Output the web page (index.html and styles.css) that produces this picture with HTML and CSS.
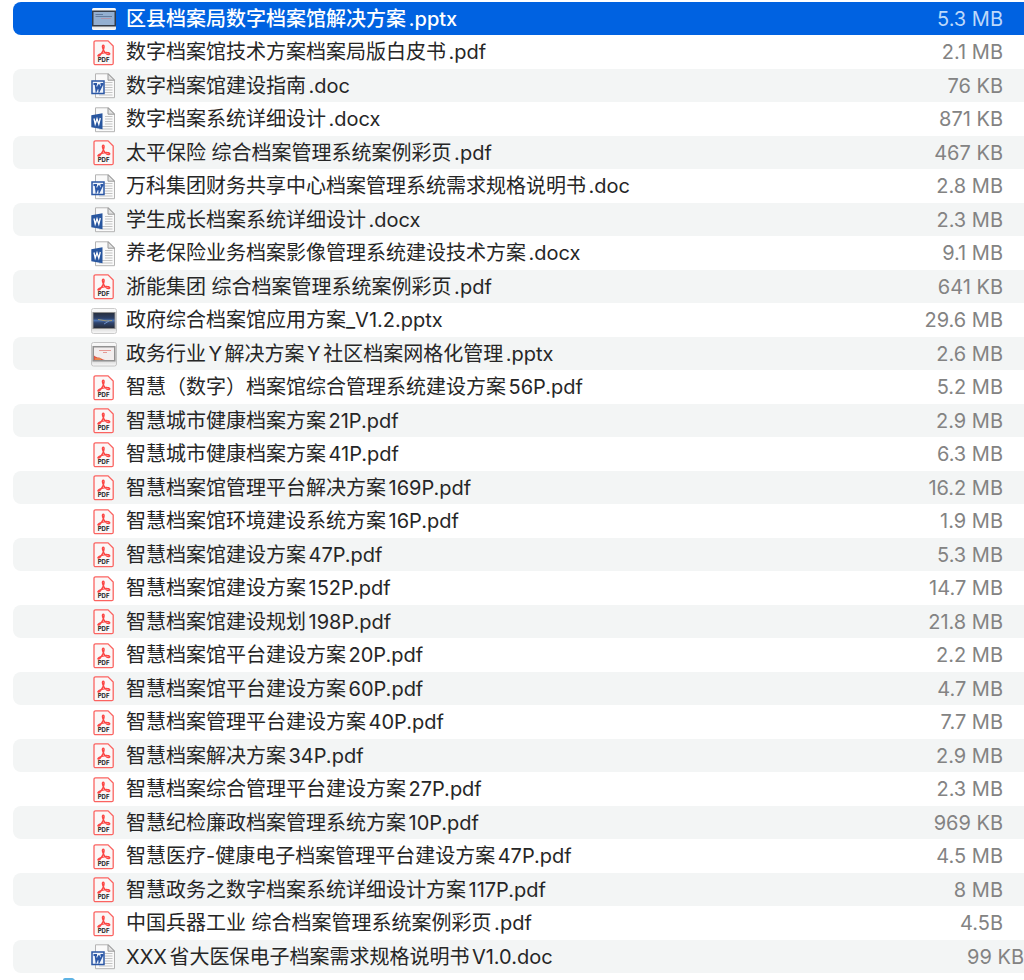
FILE: index.html
```
<!DOCTYPE html>
<html lang="zh-CN">
<head>
  <meta charset="UTF-8"/>
  <meta name="viewport" content="width=device-width,initial-scale=1.0"/>
  <title>档案方案</title>
  <link rel="stylesheet" href="styles.css">
</head>
<body>

<svg class="symbols" aria-hidden="true">
  <linearGradient id="frame" x1="0" y1="0" x2="0" y2="1">
    <stop offset="0" stop-color="#fafafa"/>
    <stop offset="0.8" stop-color="#dcdcdc"/>
    <stop offset="1" stop-color="#fafafa"/>
  </linearGradient>
  <linearGradient id="night" x1="0" y1="0" x2="0" y2="1">
    <stop offset="0" stop-color="#28303f"/>
    <stop offset="0.35" stop-color="#2c4068"/>
    <stop offset="0.5" stop-color="#4b72b0"/>
    <stop offset="0.65" stop-color="#2f4570"/>
    <stop offset="1" stop-color="#262c3a"/>
  </linearGradient>
  <symbol id="pdf" viewBox="0 0 26 26">
    <path d="M4.500 .8H17L22.200 6V23.200a1.500 1.500 0 0 1-1.500 1.500H4.500A1.500 1.500 0 0 1 3 23.200V2.300A1.500 1.500 0 0 1 4.500 .8Z" fill="#fbf7f7" stroke="#fb6360" stroke-width="1.300"/>
    <path d="M12.300 5.200c-1.500 0-.8 3 .3 5 1.200 2.400 3.600 4.500 5.400 4.300 1.700-.4.500-2-1.800-2-3.300-.1-8.700 1.500-9.200 3-.3 1 1.300.9 2.400-.7 1.800-2.400 3.600-5.800 3.700-8.100 0-.8-.2-1.500-.8-1.500Z" fill="none" stroke="#fb4644" stroke-width="1.400"/>
    <text x="12.600" y="22" text-anchor="middle" class="pdf-label">PDF</text>
  </symbol>
  <symbol id="page" viewBox="0 0 26 26">
    <path d="M4.500 .8H17.500L23.500 6.800V24.700H4.500Z" fill="#fafafa" stroke="#b4b4b4"/>
    <path d="M17 .8V7.200H23.500Z" fill="#e3e3e3" stroke="#999"/>
    <path d="M14 9.500H21.500M14 12H21.500M14 14.500H21.500M14 17H21.500M8 19.500H21.500M8 22H21.500" stroke="#c4c4c4"/>
  </symbol>
  <symbol id="doc" viewBox="0 0 26 26">
    <use href="#page"/>
    <rect x="1" y="8" width="12" height="12.500" fill="#eef3fb" stroke="#2b57a5" stroke-width="1.500"/>
    <path d="M2.500 11H6M4.500 11l.8 6.500L8 11.500l.3 6L11.500 11M9.500 11h3" fill="none" stroke="#2b57a5" stroke-width="1.800"/>
  </symbol>
  <symbol id="docx" viewBox="0 0 26 26">
    <use href="#page"/>
    <path d="M.3 8.300L11.500 6.300V22.200L.3 20.300Z" fill="#28569f"/>
    <path d="M3 11.500l1.200 5.500L6 11.800l1.800 5.400L9.300 11" fill="none" stroke="#fff" stroke-width="1.300"/>
  </symbol>
  <symbol id="ppt-blue" viewBox="0 0 26 26">
    <rect x="1" y="2" width="24" height="22" rx="1.500" fill="url(#frame)"/>
    <rect x="1" y="4.500" width="24" height="16" fill="#343c48"/>
    <rect x="2.500" y="6" width="21" height="13" fill="#93afd1"/>
    <path d="M4.500 8.500H12M4.500 10.500H21" stroke="#627c9f"/>
    <path d="M10 12.500H20" stroke="#b195ab"/>
  </symbol>
  <symbol id="ppt-night" viewBox="0 0 26 26">
    <rect x=".5" y=".5" width="25" height="25" rx="2" fill="url(#frame)" stroke="#ccc"/>
    <rect x="1.500" y="4" width="23" height="17" fill="#8d8d8d"/>
    <rect x="2.500" y="5" width="21" height="15" fill="url(#night)"/>
    <path d="M7 11.500l9 1.500 5-.5" fill="none" stroke="#a39a78"/>
    <path d="M13 16l5-3" stroke="#6b8fc8"/>
  </symbol>
  <symbol id="ppt-red" viewBox="0 0 26 26">
    <rect x=".5" y="1.500" width="25" height="23.500" rx="2" fill="url(#frame)" stroke="#c4c4c4"/>
    <rect x="1.500" y="5" width="23" height="15.500" fill="#929292"/>
    <rect x="3" y="6.500" width="20" height="12.500" fill="#f2eeee"/>
    <path d="M8 9.500H20M12 11.500H16" stroke="#e69a95"/>
    <path d="M3 14.500c2 1.500 3 2 5 2 2 .2 3 2 6 2.500H3Z" fill="#de5546"/>
    <path d="M4 18h6" stroke="#ecb14c"/>
  </symbol>
  <symbol id="folder" viewBox="0 0 26 26">
    <path d="M1 2a2 2 0 0 1 2-2h7a3 3 0 0 1 2 1l2 2h9a2 2 0 0 1 2 2v16H1Z" fill="#5eb3e4"/>
  </symbol>
</svg>

<main class="finder">
  <table class="file-list" aria-label="文件列表">
    <tbody>
      <tr class="selected"><td class="name"><svg class="icon"><use href="#ppt-blue"/></svg>区县档案局数字档案馆解决方案.pptx</td><td class="size">5.3 MB</td></tr>
      <tr><td class="name"><svg class="icon"><use href="#pdf"/></svg>数字档案馆技术方案档案局版白皮书.pdf</td><td class="size">2.1 MB</td></tr>
      <tr><td class="name"><svg class="icon"><use href="#doc"/></svg>数字档案馆建设指南.doc</td><td class="size">76 KB</td></tr>
      <tr><td class="name"><svg class="icon"><use href="#docx"/></svg>数字档案系统详细设计.docx</td><td class="size">871 KB</td></tr>
      <tr><td class="name"><svg class="icon"><use href="#pdf"/></svg>太平保险 综合档案管理系统案例彩页.pdf</td><td class="size">467 KB</td></tr>
      <tr><td class="name"><svg class="icon"><use href="#doc"/></svg>万科集团财务共享中心档案管理系统需求规格说明书.doc</td><td class="size">2.8 MB</td></tr>
      <tr><td class="name"><svg class="icon"><use href="#docx"/></svg>学生成长档案系统详细设计.docx</td><td class="size">2.3 MB</td></tr>
      <tr><td class="name"><svg class="icon"><use href="#docx"/></svg>养老保险业务档案影像管理系统建设技术方案.docx</td><td class="size">9.1 MB</td></tr>
      <tr><td class="name"><svg class="icon"><use href="#pdf"/></svg>浙能集团 综合档案管理系统案例彩页.pdf</td><td class="size">641 KB</td></tr>
      <tr><td class="name"><svg class="icon"><use href="#ppt-night"/></svg>政府综合档案馆应用方案_V1.2.pptx</td><td class="size">29.6 MB</td></tr>
      <tr><td class="name"><svg class="icon"><use href="#ppt-red"/></svg>政务行业Y解决方案Y社区档案网格化管理.pptx</td><td class="size">2.6 MB</td></tr>
      <tr><td class="name"><svg class="icon"><use href="#pdf"/></svg>智慧（数字）档案馆综合管理系统建设方案56P.pdf</td><td class="size">5.2 MB</td></tr>
      <tr><td class="name"><svg class="icon"><use href="#pdf"/></svg>智慧城市健康档案方案21P.pdf</td><td class="size">2.9 MB</td></tr>
      <tr><td class="name"><svg class="icon"><use href="#pdf"/></svg>智慧城市健康档案方案41P.pdf</td><td class="size">6.3 MB</td></tr>
      <tr><td class="name"><svg class="icon"><use href="#pdf"/></svg>智慧档案馆管理平台解决方案169P.pdf</td><td class="size">16.2 MB</td></tr>
      <tr><td class="name"><svg class="icon"><use href="#pdf"/></svg>智慧档案馆环境建设系统方案16P.pdf</td><td class="size">1.9 MB</td></tr>
      <tr><td class="name"><svg class="icon"><use href="#pdf"/></svg>智慧档案馆建设方案47P.pdf</td><td class="size">5.3 MB</td></tr>
      <tr><td class="name"><svg class="icon"><use href="#pdf"/></svg>智慧档案馆建设方案152P.pdf</td><td class="size">14.7 MB</td></tr>
      <tr><td class="name"><svg class="icon"><use href="#pdf"/></svg>智慧档案馆建设规划198P.pdf</td><td class="size">21.8 MB</td></tr>
      <tr><td class="name"><svg class="icon"><use href="#pdf"/></svg>智慧档案馆平台建设方案20P.pdf</td><td class="size">2.2 MB</td></tr>
      <tr><td class="name"><svg class="icon"><use href="#pdf"/></svg>智慧档案馆平台建设方案60P.pdf</td><td class="size">4.7 MB</td></tr>
      <tr><td class="name"><svg class="icon"><use href="#pdf"/></svg>智慧档案管理平台建设方案40P.pdf</td><td class="size">7.7 MB</td></tr>
      <tr><td class="name"><svg class="icon"><use href="#pdf"/></svg>智慧档案解决方案34P.pdf</td><td class="size">2.9 MB</td></tr>
      <tr><td class="name"><svg class="icon"><use href="#pdf"/></svg>智慧档案综合管理平台建设方案27P.pdf</td><td class="size">2.3 MB</td></tr>
      <tr><td class="name"><svg class="icon"><use href="#pdf"/></svg>智慧纪检廉政档案管理系统方案10P.pdf</td><td class="size">969 KB</td></tr>
      <tr><td class="name"><svg class="icon"><use href="#pdf"/></svg>智慧医疗-健康电子档案管理平台建设方案47P.pdf</td><td class="size">4.5 MB</td></tr>
      <tr><td class="name"><svg class="icon"><use href="#pdf"/></svg>智慧政务之数字档案系统详细设计方案117P.pdf</td><td class="size">8 MB</td></tr>
      <tr><td class="name"><svg class="icon"><use href="#pdf"/></svg>中国兵器工业 综合档案管理系统案例彩页.pdf</td><td class="size">4.5B</td></tr>
      <tr><td class="name"><svg class="icon"><use href="#doc"/></svg>XXX省大医保电子档案需求规格说明书V1.0.doc</td><td class="size wide">99 KB</td></tr>
      <tr><td class="name parent"><svg class="icon"><use href="#folder"/></svg></td><td class="size"></td></tr>
    </tbody>
  </table>
</main>

</body>
</html>
```
FILE: styles.css
```
* {
  margin: 0;
  padding: 0;
  box-sizing: border-box;
}

body {
  font-family: Inter, "Noto Sans CJK SC", sans-serif;
  font-size: 20px;
  line-height: 32px;
  background: #fff;
  color: #262626;
}

/* holds the shared icon symbols, draws nothing itself */
.symbols {
  position: absolute;
  width: 26px;
  height: 26px;
}

.finder {
  height: 100vh;
  overflow: hidden;
  padding: 2px 0 0 13px;
}

.file-list {
  width: 100%;
  border-collapse: collapse;
  text-autospace: normal;
}

.file-list tr {
  height: 34px;
}

.file-list tr:nth-child(odd) {
  height: 33px;
}

.file-list td {
  white-space: nowrap;
  vertical-align: middle;
}

.file-list td:first-child {
  border-radius: 8px 0 0 8px;
}

.file-list tr:nth-child(odd) td {
  background: #f3f5f5;
}

.file-list tr.selected td {
  background: #0062e1;
  color: #fff;
}

.file-list tr.selected .name {
  font-weight: 500;
}

.file-list tr.selected .size {
  color: #bdd8fa;
}

.file-list .name {
  padding-left: 78px;
}

.file-list .size {
  padding-right: 21px;
  text-align: right;
  color: #838383;
}

.file-list .size.wide {
  padding-right: 0;
}

.file-list .parent {
  padding-left: 49px;
}

.icon {
  display: inline-block;
  width: 26px;
  height: 26px;
  margin: 0 9px 2px 0;
  vertical-align: middle;
}

.pdf-label {
  font: bold 6px Inter, sans-serif;
  fill: #222;
}
```
